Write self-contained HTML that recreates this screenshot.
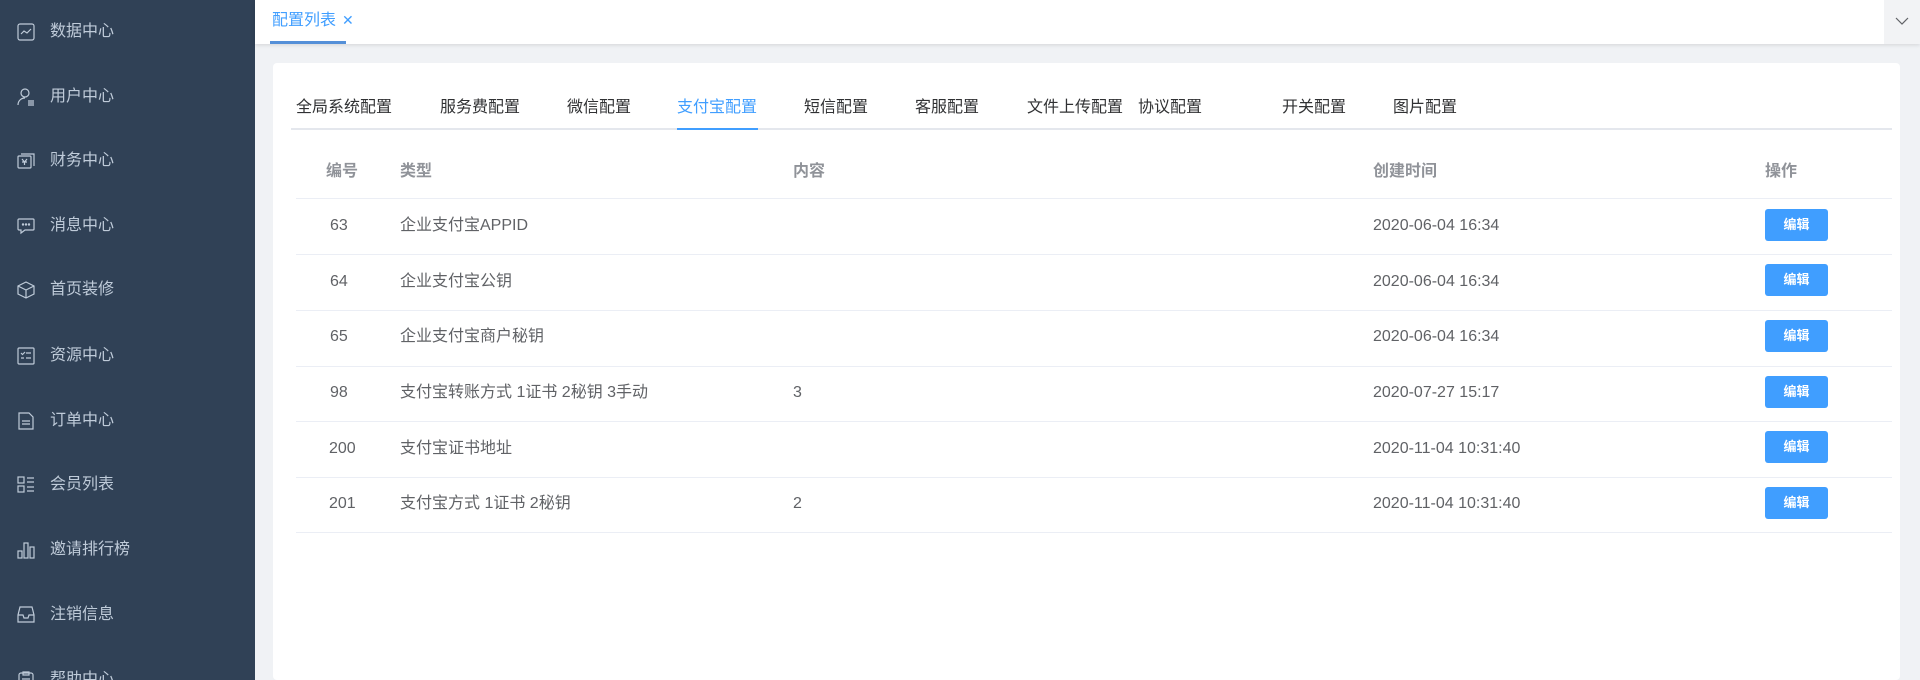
<!DOCTYPE html>
<html style="overflow:hidden"><head><meta charset="utf-8"><style>
*{margin:0;padding:0;box-sizing:border-box}
html,body{width:1920px;height:680px;overflow:hidden}
body{background:#f0f2f5;font-family:"Liberation Sans","Noto Sans CJK SC",sans-serif;position:relative}
.side{position:absolute;left:0;top:0;width:255px;height:680px;background:#304156;overflow:hidden}
.mi{position:absolute;left:0;height:30px;width:255px;color:#bfcbd9;font-size:16px;line-height:30px}
.mi span{position:absolute;left:50px;top:0}
.mi svg{position:absolute;left:17px;top:6px;width:18px;height:18px}
.top{position:absolute;left:255px;top:0;width:1665px;height:44px;background:#fff;box-shadow:0 1px 4px rgba(0,0,0,.12)}
.tab0{position:absolute;left:17px;top:10px;color:#409eff;font-size:16px;line-height:20px}
.tab0 i{font-style:normal;font-size:14px;margin-left:6px}
.tabline{position:absolute;left:15px;top:41px;width:76px;height:3px;background:#5590d8}
.dd{position:absolute;right:0;top:0;width:36px;height:44px;background:#f2f3f5}
.card{position:absolute;left:273px;top:63px;width:1627px;height:617px;background:#fff;border-radius:4px}
.t{position:absolute;top:98px;font-size:16px;line-height:20px;color:#303133;white-space:nowrap}
.tl{position:absolute;left:291px;top:128px;width:1601px;height:2px;background:#e4e7ed}
.ta{position:absolute;top:128px;height:2px;background:#409eff}
.h,.c{position:absolute;font-size:16px;line-height:20px;white-space:nowrap}
.h{color:#909399;font-weight:bold;top:162px}
.c{color:#606266}
.ln{position:absolute;left:296px;width:1596px;height:1px;background:#ebeef5}
.btn{position:absolute;left:1765px;width:63px;height:32px;background:#409eff;border-radius:3px;color:#fff;font-size:13px;font-weight:bold;text-align:center;line-height:32px}
</style></head><body>
<div class="side">
<div class="mi" style="top:17px"><svg viewBox="0 0 18 18" fill="none" stroke="#bfcbd9" stroke-width="1.2"><rect x="1" y="1" width="16" height="16" rx="2"/><path d="M4 11l3-3 3 2 4-4"/></svg><span>数据中心</span></div>
<div class="mi" style="top:82px"><svg viewBox="0 0 18 18" fill="none" stroke="#bfcbd9" stroke-width="1.2"><circle cx="8" cy="5" r="4"/><path d="M1 17c0-4 3-7 7-7M11 13h6M11 15h6M11 17h6"/></svg><span>用户中心</span></div>
<div class="mi" style="top:146px"><svg viewBox="0 0 18 18" fill="none" stroke="#bfcbd9" stroke-width="1.2"><rect x="1" y="4" width="13" height="12" rx="1"/><path d="M4 2h13v12M5 7l2.5 3L10 7M5 10h5M7.5 10v3"/></svg><span>财务中心</span></div>
<div class="mi" style="top:211px"><svg viewBox="0 0 18 18" fill="none" stroke="#bfcbd9" stroke-width="1.2"><path d="M2 2h14a1 1 0 011 1v9a1 1 0 01-1 1H8l-4 3v-3H2a1 1 0 01-1-1V3a1 1 0 011-1z"/><circle cx="6" cy="7.5" r=".6"/><circle cx="9" cy="7.5" r=".6"/><circle cx="12" cy="7.5" r=".6"/></svg><span>消息中心</span></div>
<div class="mi" style="top:275px"><svg viewBox="0 0 18 18" fill="none" stroke="#bfcbd9" stroke-width="1.2"><path d="M9 1l8 4v8l-8 4-8-4V5zM1 5l8 4 8-4M9 9v8"/></svg><span>首页装修</span></div>
<div class="mi" style="top:341px"><svg viewBox="0 0 18 18" fill="none" stroke="#bfcbd9" stroke-width="1.2"><rect x="1" y="1" width="16" height="16" rx="1"/><path d="M4 6l1.5 1.5L8 5M9 6h5M4 11h3M9 11h5"/></svg><span>资源中心</span></div>
<div class="mi" style="top:406px"><svg viewBox="0 0 18 18" fill="none" stroke="#bfcbd9" stroke-width="1.2"><path d="M2 1h10l4 4v12H2zM5 9h8M5 12h8"/></svg><span>订单中心</span></div>
<div class="mi" style="top:470px"><svg viewBox="0 0 18 18" fill="none" stroke="#bfcbd9" stroke-width="1.2"><rect x="1" y="1" width="6" height="6"/><rect x="1" y="10" width="6" height="6"/><path d="M10 2h7M10 6h7M10 11h7M10 15h7"/></svg><span>会员列表</span></div>
<div class="mi" style="top:535px"><svg viewBox="0 0 18 18" fill="none" stroke="#bfcbd9" stroke-width="1.2"><rect x="1" y="10" width="4" height="7"/><rect x="7" y="2" width="4" height="15"/><rect x="13" y="6" width="4" height="11"/></svg><span>邀请排行榜</span></div>
<div class="mi" style="top:600px"><svg viewBox="0 0 18 18" fill="none" stroke="#bfcbd9" stroke-width="1.2"><path d="M3 1h12l2 8v7H1V9zM1 9h5l1 3h4l1-3h5"/></svg><span>注销信息</span></div>
<div class="mi" style="top:665px"><svg viewBox="0 0 18 18" fill="none" stroke="#bfcbd9" stroke-width="1.2"><rect x="2" y="2" width="14" height="15" rx="2"/><path d="M6 1h6v3H6zM5 8h8"/></svg><span>帮助中心</span></div>
</div>
<div class="top"><div class="tab0">配置列表<i>✕</i></div><div class="tabline"></div>
<div class="dd"><svg width="36" height="44" viewBox="0 0 36 44"><path d="M12 18l6 6 6-6" fill="none" stroke="#606266" stroke-width="1.2"/></svg></div></div>
<div class="card"></div>
<div class="t" style="left:296px">全局系统配置</div>
<div class="t" style="left:440px">服务费配置</div>
<div class="t" style="left:567px">微信配置</div>
<div class="t" style="left:677px;color:#409eff">支付宝配置</div>
<div class="t" style="left:804px">短信配置</div>
<div class="t" style="left:915px">客服配置</div>
<div class="t" style="left:1027px">文件上传配置</div>
<div class="t" style="left:1138px">协议配置</div>
<div class="t" style="left:1282px">开关配置</div>
<div class="t" style="left:1393px">图片配置</div>
<div class="tl"></div><div class="ta" style="left:677px;width:81px"></div>
<div class="h" style="left:326px">编号</div>
<div class="h" style="left:400px">类型</div>
<div class="h" style="left:793px">内容</div>
<div class="h" style="left:1373px">创建时间</div>
<div class="h" style="left:1765px">操作</div>
<div class="ln" style="top:198px"></div>
<div class="c" style="left:330px;top:216px">63</div><div class="c" style="left:400px;top:216px">企业支付宝APPID</div><div class="c" style="left:1373px;top:216px">2020-06-04 16:34</div><div class="btn" style="top:209px">编辑</div>
<div class="ln" style="top:254px"></div>
<div class="c" style="left:330px;top:272px">64</div><div class="c" style="left:400px;top:272px">企业支付宝公钥</div><div class="c" style="left:1373px;top:272px">2020-06-04 16:34</div><div class="btn" style="top:264px">编辑</div>
<div class="ln" style="top:310px"></div>
<div class="c" style="left:330px;top:327px">65</div><div class="c" style="left:400px;top:327px">企业支付宝商户秘钥</div><div class="c" style="left:1373px;top:327px">2020-06-04 16:34</div><div class="btn" style="top:320px">编辑</div>
<div class="ln" style="top:366px"></div>
<div class="c" style="left:330px;top:383px">98</div><div class="c" style="left:400px;top:383px">支付宝转账方式 1证书 2秘钥 3手动</div><div class="c" style="left:793px;top:383px">3</div><div class="c" style="left:1373px;top:383px">2020-07-27 15:17</div><div class="btn" style="top:376px">编辑</div>
<div class="ln" style="top:421px"></div>
<div class="c" style="left:329px;top:439px">200</div><div class="c" style="left:400px;top:439px">支付宝证书地址</div><div class="c" style="left:1373px;top:439px">2020-11-04 10:31:40</div><div class="btn" style="top:431px">编辑</div>
<div class="ln" style="top:477px"></div>
<div class="c" style="left:329px;top:494px">201</div><div class="c" style="left:400px;top:494px">支付宝方式 1证书 2秘钥</div><div class="c" style="left:793px;top:494px">2</div><div class="c" style="left:1373px;top:494px">2020-11-04 10:31:40</div><div class="btn" style="top:487px">编辑</div>
<div class="ln" style="top:532px"></div>
</body></html>
